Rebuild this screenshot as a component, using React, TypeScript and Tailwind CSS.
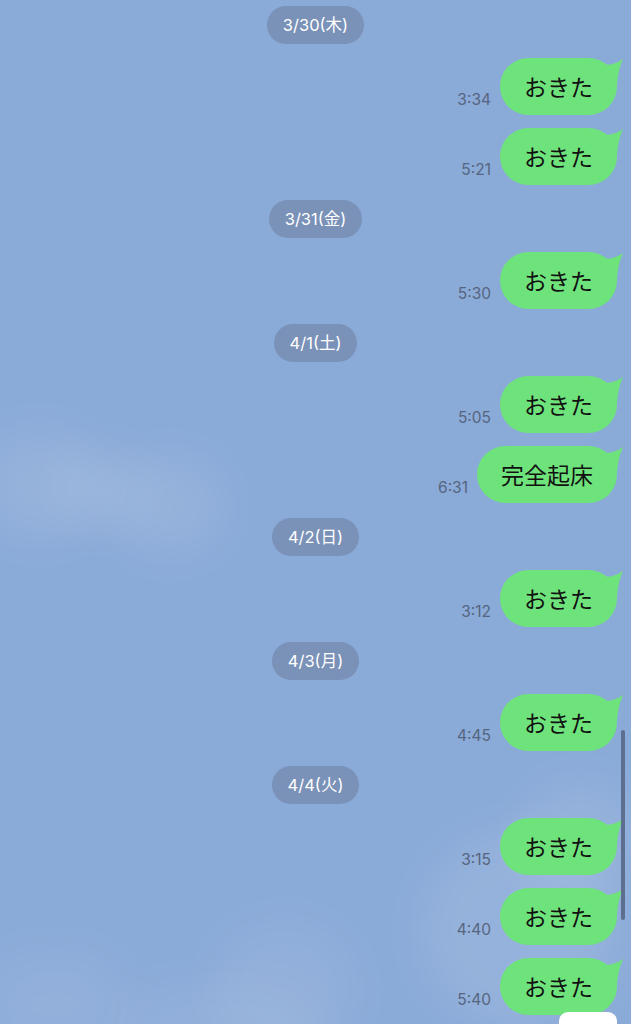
import React from "react";

type Item =
  | { kind: "date"; label: string }
  | { kind: "msg"; time: string; text: string };

const items: Item[] = [
  { kind: "date", label: "3/30(木)" },
  { kind: "msg", time: "3:34", text: "おきた" },
  { kind: "msg", time: "5:21", text: "おきた" },
  { kind: "date", label: "3/31(金)" },
  { kind: "msg", time: "5:30", text: "おきた" },
  { kind: "date", label: "4/1(土)" },
  { kind: "msg", time: "5:05", text: "おきた" },
  { kind: "msg", time: "6:31", text: "完全起床" },
  { kind: "date", label: "4/2(日)" },
  { kind: "msg", time: "3:12", text: "おきた" },
  { kind: "date", label: "4/3(月)" },
  { kind: "msg", time: "4:45", text: "おきた" },
  { kind: "date", label: "4/4(火)" },
  { kind: "msg", time: "3:15", text: "おきた" },
  { kind: "msg", time: "4:40", text: "おきた" },
  { kind: "msg", time: "5:40", text: "おきた" },
];

const latin = { fontFamily: 'Inter, "Noto Sans CJK JP", sans-serif' };
const cjk = { fontFamily: '"Noto Sans CJK JP", "Noto Sans", sans-serif' };

function DatePill({ label }: { label: string }) {
  return (
    <div className="flex justify-center my-[2px]">
      <div
        className="h-[38px] px-[16px] rounded-full bg-[#7a91b8] text-white text-[16.5px] flex items-center leading-none"
        style={latin}
      >
        {label}
      </div>
    </div>
  );
}

function Message({ time, text }: { time: string; text: string }) {
  return (
    <div className="h-[58px] flex justify-end items-start pr-[14px]">
      <div className="h-[57px] flex items-end gap-[9px]">
        <span
          className="text-[15.5px] leading-none text-[#56657f] mb-[8px]"
          style={latin}
        >
          {time}
        </span>
        <div className="relative h-[57px] rounded-full bg-[#6fe37b] px-[24px] flex items-center">
          <svg
            className="absolute right-[-7px] top-0"
            width="24"
            height="27"
            viewBox="0 0 24 27"
          >
            <path
              d="M0 6 C8 8 16 6 23 1 C20 8 18 14 17 27 L0 27 Z"
              fill="#6fe37b"
            />
          </svg>
          <span className="relative text-[23px] leading-none text-[#111]" style={cjk}>
            {text}
          </span>
        </div>
      </div>
    </div>
  );
}

export default function App() {
  return (
    <div className="relative w-[631px] h-[1024px] overflow-hidden bg-[#8aaad8]">
      {/* faint clouds in the wallpaper */}
      <div className="absolute inset-0 pointer-events-none">
        <div className="absolute left-[-20px] top-[430px] w-[120px] h-[110px] rounded-full bg-white/10 blur-xl" />
        <div className="absolute left-[60px] top-[450px] w-[90px] h-[80px] rounded-full bg-white/10 blur-xl" />
        <div className="absolute left-[115px] top-[455px] w-[110px] h-[100px] rounded-full bg-white/10 blur-xl" />
        <div className="absolute left-[-20px] top-[950px] w-[150px] h-[110px] rounded-full bg-white/[0.07] blur-xl" />
        <div className="absolute left-[120px] top-[985px] w-[200px] h-[90px] rounded-full bg-white/[0.07] blur-xl" />
        <div className="absolute left-[210px] top-[920px] w-[150px] h-[140px] rounded-full bg-white/[0.07] blur-xl" />
        <div className="absolute left-[420px] top-[830px] w-[200px] h-[200px] rounded-full bg-white/10 blur-xl" />
        <div className="absolute left-[520px] top-[780px] w-[120px] h-[120px] rounded-full bg-white/10 blur-xl" />
      </div>

      <div className="relative flex flex-col gap-[12px] pt-[4px]">
        {items.map((it, i) =>
          it.kind === "date" ? (
            <DatePill key={i} label={it.label} />
          ) : (
            <Message key={i} time={it.time} text={it.text} />
          )
        )}
      </div>

      {/* scrollbar */}
      <div className="absolute left-[621px] top-[730px] w-[4px] h-[190px] rounded-full bg-[#5d6f90]" />
      {/* partially visible button at bottom */}
      <div className="absolute left-[559px] top-[1012px] w-[58px] h-[30px] rounded-[9px] bg-white" />
    </div>
  );
}
